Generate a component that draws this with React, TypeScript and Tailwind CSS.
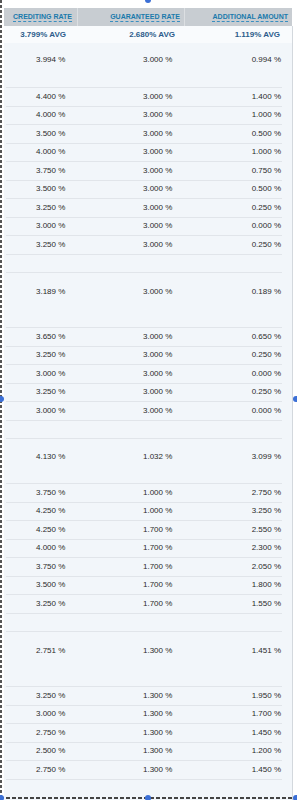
import React from "react";

type Row = [string, string, string];
type Group = { gap: boolean; h: number; pt: number; summary: Row; rows: Row[] };

const groups: Group[] = [
  {
    gap: false,
    h: 45,
    pt: 12,
    summary: ["3.994 %", "3.000 %", "0.994 %"],
    rows: [
      ["4.400 %", "3.000 %", "1.400 %"],
      ["4.000 %", "3.000 %", "1.000 %"],
      ["3.500 %", "3.000 %", "0.500 %"],
      ["4.000 %", "3.000 %", "1.000 %"],
      ["3.750 %", "3.000 %", "0.750 %"],
      ["3.500 %", "3.000 %", "0.500 %"],
      ["3.250 %", "3.000 %", "0.250 %"],
      ["3.000 %", "3.000 %", "0.000 %"],
      ["3.250 %", "3.000 %", "0.250 %"],
    ],
  },
  {
    gap: true,
    h: 55,
    pt: 14,
    summary: ["3.189 %", "3.000 %", "0.189 %"],
    rows: [
      ["3.650 %", "3.000 %", "0.650 %"],
      ["3.250 %", "3.000 %", "0.250 %"],
      ["3.000 %", "3.000 %", "0.000 %"],
      ["3.250 %", "3.000 %", "0.250 %"],
      ["3.000 %", "3.000 %", "0.000 %"],
    ],
  },
  {
    gap: true,
    h: 45,
    pt: 13,
    summary: ["4.130 %", "1.032 %", "3.099 %"],
    rows: [
      ["3.750 %", "1.000 %", "2.750 %"],
      ["4.250 %", "1.000 %", "3.250 %"],
      ["4.250 %", "1.700 %", "2.550 %"],
      ["4.000 %", "1.700 %", "2.300 %"],
      ["3.750 %", "1.700 %", "2.050 %"],
      ["3.500 %", "1.700 %", "1.800 %"],
      ["3.250 %", "1.700 %", "1.550 %"],
    ],
  },
  {
    gap: true,
    h: 55,
    pt: 14,
    summary: ["2.751 %", "1.300 %", "1.451 %"],
    rows: [
      ["3.250 %", "1.300 %", "1.950 %"],
      ["3.000 %", "1.300 %", "1.700 %"],
      ["2.750 %", "1.300 %", "1.450 %"],
      ["2.500 %", "1.300 %", "1.200 %"],
      ["2.750 %", "1.300 %", "1.450 %"],
    ],
  },
];

function Cells({ r }: { r: Row }) {
  return (
    <>
      <div className="w-[107px] pl-[30px]">{r[0]}</div>
      <div className="w-[107px] pl-[30px]">{r[1]}</div>
      <div className="flex-1 text-right pr-[1px]">{r[2]}</div>
    </>
  );
}

function Handle({ cls }: { cls: string }) {
  return <div className={`absolute w-[6px] h-[6px] rounded-full bg-[#3b6fd6] ${cls}`} />;
}

export default function App() {
  return (
    <div
      className="relative w-[297px] h-[800px] overflow-hidden bg-white flex flex-col"
      style={{ fontFamily: '"Liberation Sans", Arial, sans-serif' }}
    >
      <div className="h-[8px] shrink-0" />
      {/* header */}
      <div className="ml-[4px] w-[288px] h-[18px] shrink-0 bg-[#c8cdd2] flex items-center text-[7px] font-bold text-[#1a7aac] leading-[10px]">
        <div className="w-[73px] text-right pr-[5px]">
          <span className="underline decoration-dashed decoration-[#3a8fc0] underline-offset-2">CREDITING RATE</span>
        </div>
        <div className="w-px h-full bg-[#dcdfe2]" />
        <div className="w-[106px] text-right pr-[4px]">
          <span className="underline decoration-dashed decoration-[#3a8fc0] underline-offset-2">GUARANTEED RATE</span>
        </div>
        <div className="w-px h-full bg-[#dcdfe2]" />
        <div className="flex-1 text-right pr-[4px]">
          <span className="underline decoration-dashed decoration-[#3a8fc0] underline-offset-2">ADDITIONAL AMOUNT</span>
        </div>
      </div>
      {/* avg row */}
      <div className="ml-[4px] w-[289px] h-[17px] shrink-0 bg-[#f9fbfd] border-r border-[#d3d8dd] flex items-center text-[8px] font-bold text-[#2c5b8b] leading-[10px]">
        <div className="w-[74px] text-right pr-[12px]">3.799% AVG</div>
        <div className="w-[107px] text-right pr-[10px]">2.680% AVG</div>
        <div className="flex-1 text-right pr-[12px]">1.119% AVG</div>
      </div>
      {/* body */}
      <div className="ml-[4px] w-[289px] flex-1 bg-[#f2f6fa] border-r border-[#d3d8dd] text-[8px] text-[#2b2b2b] leading-[10px]">
        <div className="ml-[2px] w-[276px]">
          {groups.map((g, gi) => (
            <React.Fragment key={gi}>
              {g.gap && <div className="h-[18.5px] border-b border-[#e1e5ea]" />}
              <div
                className="flex items-start border-b border-[#e1e5ea]"
                style={{ height: g.h, paddingTop: g.pt }}
              >
                <Cells r={g.summary} />
              </div>
              {g.rows.map((r, ri) => (
                <div key={ri} className="h-[18.5px] flex items-center border-b border-[#e1e5ea]">
                  <Cells r={r} />
                </div>
              ))}
            </React.Fragment>
          ))}
        </div>
      </div>

      {/* selection overlay */}
      <div className="absolute left-0 top-0 w-[2px] h-[799px] bg-[repeating-linear-gradient(to_bottom,#555_0px,#555_3px,transparent_3px,transparent_5px)]" />
      <div className="absolute left-0 top-[797px] w-[297px] h-[2px] bg-[repeating-linear-gradient(to_right,#444_0px,#444_4px,transparent_4px,transparent_6px)]" />
      <Handle cls="left-[145px] top-[-3px]" />
      <Handle cls="left-[-2px] top-[396px]" />
      <Handle cls="left-[293px] top-[396px]" />
      <Handle cls="left-[-2px] top-[795px]" />
      <Handle cls="left-[145px] top-[795px]" />
      <Handle cls="left-[293px] top-[795px]" />
    </div>
  );
}
